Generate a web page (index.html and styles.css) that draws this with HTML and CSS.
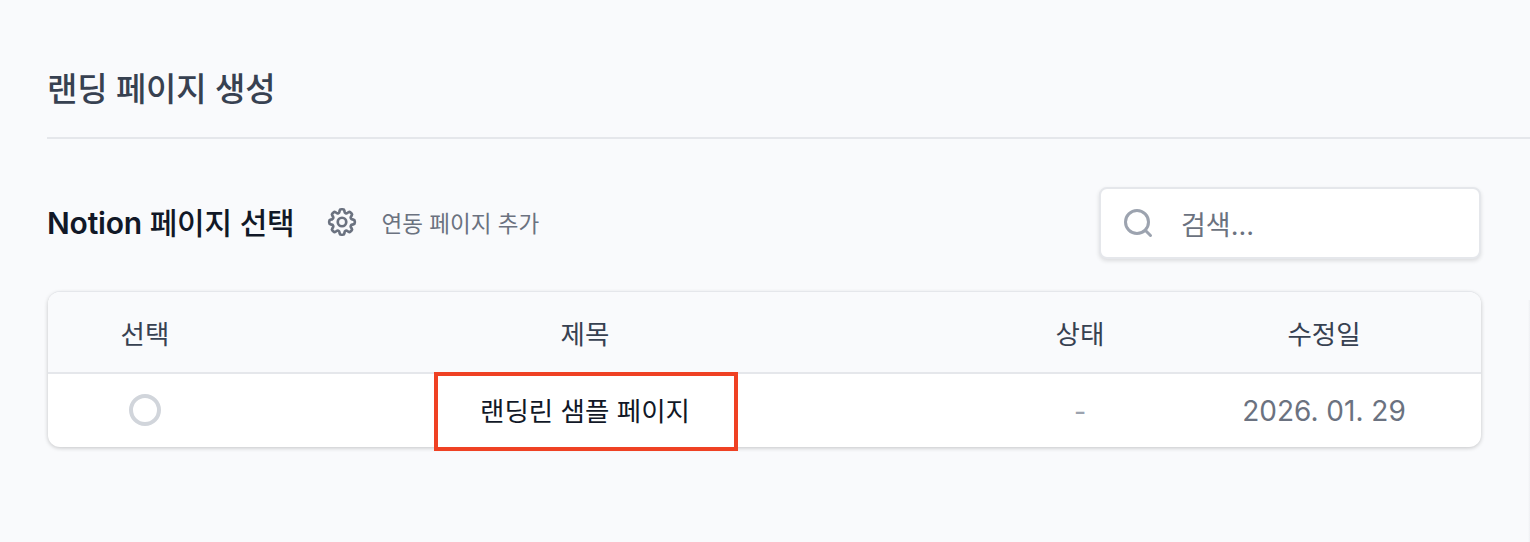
FILE: index.html
```html
<!DOCTYPE html>
<html lang="ko">
<head>
    <meta charset="UTF-8">
    <meta name="viewport" content="width=device-width, initial-scale=1.0">
    <title>랜딩 페이지 생성</title>
    <link rel="stylesheet" href="styles.css">
</head>
<body>
    <main class="page">
        <h1 class="page-title">랜딩 페이지 생성</h1>

        <div class="toolbar">
            <div class="toolbar-left">
                <h2 class="section-title"><span class="brand">Notion</span> 페이지 선택</h2>
                <a class="link-pages">
                    <svg class="gear" viewBox="0 0 24 24" fill="none" stroke="currentColor" stroke-width="1.9" stroke-linecap="round" stroke-linejoin="round">
                        <path d="M10.343 3.94c.09-.542.56-.94 1.11-.94h1.093c.55 0 1.02.398 1.11.94l.149.894c.07.424.384.764.78.93.398.164.855.142 1.205-.108l.737-.527a1.125 1.125 0 0 1 1.45.12l.773.774c.39.389.44 1.002.12 1.45l-.527.737c-.25.35-.272.806-.107 1.204.165.397.505.71.93.78l.893.15c.543.09.94.56.94 1.109v1.094c0 .55-.397 1.02-.94 1.11l-.893.149c-.425.07-.765.383-.93.78-.165.398-.143.854.107 1.204l.527.738c.32.447.269 1.06-.12 1.45l-.774.773a1.125 1.125 0 0 1-1.449.12l-.738-.527c-.35-.25-.806-.272-1.203-.107-.397.165-.71.505-.781.929l-.149.894c-.09.542-.56.94-1.11.94h-1.094c-.55 0-1.019-.398-1.11-.94l-.148-.894c-.071-.424-.384-.764-.781-.93-.398-.164-.854-.142-1.204.108l-.738.527c-.447.32-1.06.269-1.45-.12l-.773-.774a1.125 1.125 0 0 1-.12-1.45l.527-.737c.25-.35.273-.806.108-1.204-.165-.397-.505-.71-.93-.78l-.894-.15c-.542-.09-.94-.56-.94-1.109v-1.094c0-.55.398-1.02.94-1.11l.894-.149c.424-.7.765-.383.93-.78.165-.398.143-.854-.107-1.204l-.527-.738a1.125 1.125 0 0 1 .12-1.45l.773-.773a1.125 1.125 0 0 1 1.45-.12l.737.527c.35.25.807.272 1.204.107.397-.165.71-.505.78-.929l.15-.894Z"/>
                        <path d="M15 12a3 3 0 1 1-6 0 3 3 0 0 1 6 0Z"/>
                    </svg>
                    <span>연동 페이지 추가</span>
                </a>
            </div>
            <div class="search">
                <svg class="search-icon" viewBox="0 0 32 32" fill="none" stroke="currentColor" stroke-width="3" stroke-linecap="round">
                    <circle cx="15" cy="15" r="11.5"/>
                    <path d="M24 24l4.5 4.5"/>
                </svg>
                <span class="search-placeholder">검색...</span>
            </div>
        </div>

        <section class="table-card">
            <div class="row row-head">
                <div>선택</div>
                <div>제목</div>
                <div>상태</div>
                <div>수정일</div>
            </div>
            <div class="row row-body">
                <div class="cell-radio"><span class="radio"></span></div>
                <div class="cell-title">랜딩린 샘플 페이지</div>
                <div class="cell-status">-</div>
                <div class="cell-date">2026. 01. 29</div>
            </div>
            <div class="highlight"></div>
        </section>
        <div class="edge-shade"></div>
    </main>
</body>
</html>
```

FILE: styles.css
```css
* {
    box-sizing: border-box;
}
body {
    margin: 0;
    background: #f9fafc;
    font-family: Inter, "Noto Sans CJK KR", sans-serif;
    color: #374151;
}
.page {
    position: relative;
    min-height: 542px;
    padding: 63px 0 0 47px;
}
.page-title {
    margin: 0;
    height: 76px;
    border-bottom: 2px solid #e5e7eb;
    font-size: 33px;
    line-height: 52px;
    font-weight: 500;
    letter-spacing: -0.2px;
    color: #374151;
}
.toolbar {
    display: flex;
    justify-content: space-between;
    align-items: center;
    width: 1434px;
    height: 72px;
    margin-top: 48px;
}
.toolbar-left {
    display: flex;
    align-items: center;
    gap: 30px;
}
.section-title {
    margin: 0;
    font-size: 30px;
    line-height: 40px;
    font-weight: 500;
    letter-spacing: -0.2px;
    color: #111827;
}
.brand {
    font-weight: 600;
}
.link-pages {
    display: flex;
    align-items: center;
    gap: 23px;
    margin-top: -3px;
    font-size: 22.5px;
    color: #6b7280;
}
.gear {
    width: 34px;
    height: 34px;
}
.search {
    display: flex;
    align-items: center;
    gap: 27px;
    width: 382px;
    height: 72px;
    padding-left: 21px;
    background: #fff;
    border: 2px solid #e5e7eb;
    border-radius: 8px;
    box-shadow: 0 2px 4px rgba(0, 0, 0, 0.12);
}
.search-icon {
    width: 32px;
    height: 32px;
    color: #9ca3af;
}
.search-placeholder {
    font-size: 27px;
    color: #6b7280;
}
.table-card {
    position: relative;
    width: 1433px;
    margin: 33px 0 0 1px;
    background: #fff;
    border-radius: 12px;
    box-shadow: 0 -1px 0 #e5e7eb, 0 1px 4px rgba(0, 0, 0, 0.22);
}
.row {
    display: grid;
    grid-template-columns: 194px 686px 304px 184px;
    align-items: center;
    text-align: center;
}
.row-head {
    height: 82px;
    background: #f9fafc;
    border-bottom: 2px solid #e5e7eb;
    border-radius: 12px 12px 0 0;
    font-size: 26.5px;
    color: #374151;
}
.row-body {
    height: 73px;
    font-size: 26.5px;
}
.cell-radio {
    display: flex;
    justify-content: center;
}
.radio {
    width: 32px;
    height: 32px;
    margin-top: -2px;
    border: 4px solid #d1d5db;
    border-radius: 50%;
}
.cell-title {
    margin-top: -2px;
    color: #111827;
}
.cell-status {
    color: #9ca3af;
}
.cell-date {
    font-size: 28px;
    color: #6b7280;
    white-space: nowrap;
}
.highlight {
    position: absolute;
    left: 386px;
    top: 80px;
    width: 304px;
    height: 79px;
    border: 4px solid #ef4123;
}
.edge-shade {
    position: absolute;
    top: 300px;
    right: 0;
    width: 2px;
    height: 242px;
    background: linear-gradient(to right, #f9fafc, #eff0f3);
}
```
